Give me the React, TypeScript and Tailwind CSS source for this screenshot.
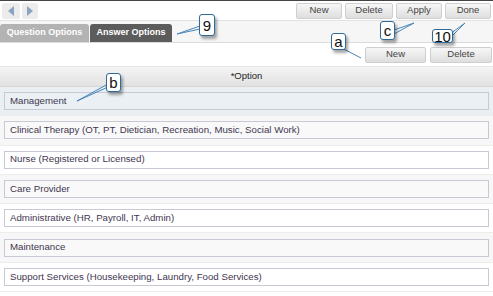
import React from 'react';

const options = [
  'Management',
  'Clinical Therapy (OT, PT, Dietician, Recreation, Music, Social Work)',
  'Nurse (Registered or Licensed)',
  'Care Provider',
  'Administrative (HR, Payroll, IT, Admin)',
  'Maintenance',
  'Support Services (Housekeeping, Laundry, Food Services)',
];

function ToolButton({ label, className = '' }: { label: string; className?: string }) {
  return (
    <div
      className={`h-[16px] flex items-center justify-center rounded-[2px] border border-[#cfcfcf] bg-gradient-to-b from-[#f7f7f7] to-[#dedede] text-[9.5px] text-[#444] ${className}`}
    >
      {label}
    </div>
  );
}

function Callout({ label, className }: { label: string; className: string }) {
  return (
    <div
      className={`absolute flex items-center justify-center rounded-[3px] border border-[#2f6b9a] bg-white text-[15px] leading-none text-[#111] shadow-[2px_3px_3px_rgba(0,0,0,0.35)] ${className}`}
    >
      {label}
    </div>
  );
}

export default function App() {
  return (
    <div className="relative w-[493px] h-[296px] overflow-hidden bg-white font-['Liberation_Sans',Arial,sans-serif]">
      {/* top toolbar */}
      <div className="h-[21px] border-t border-[#444] flex items-center justify-between px-[2px] border-b border-b-[#e2e2e2]">
        <div className="flex gap-[2px]">
          <div className="w-[18px] h-[16px] rounded-[2px] bg-[#ececec] flex items-center justify-center">
            <svg width="8" height="10" viewBox="0 0 8 10"><path d="M7 0 L1 5 L7 10 Z" fill="#8aa4c4" /></svg>
          </div>
          <div className="w-[16px] h-[16px] rounded-[2px] bg-[#ececec] flex items-center justify-center">
            <svg width="8" height="10" viewBox="0 0 8 10"><path d="M1 0 L7 5 L1 10 Z" fill="#8aa4c4" /></svg>
          </div>
        </div>
        <div className="flex gap-[3px]">
          <ToolButton label="New" className="w-[46px]" />
          <ToolButton label="Delete" className="w-[48px]" />
          <ToolButton label="Apply" className="w-[46px]" />
          <ToolButton label="Done" className="w-[46px]" />
        </div>
      </div>

      {/* tabs */}
      <div className="h-[22px] flex items-end bg-[#f6f6f6] border-b border-[#dcdcdc]">
        <div className="w-[89px] h-[18px] rounded-t-[3px] bg-[#b3b3b3] text-white font-bold text-[9px] flex items-center justify-center">
          Question Options
        </div>
        <div className="ml-[1px] w-[82px] h-[18px] rounded-t-[3px] bg-[#5c5c5c] text-white font-bold text-[9px] flex items-center justify-center">
          Answer Options
        </div>
      </div>

      {/* sub toolbar */}
      <div className="h-[24px] flex items-center justify-end gap-[4px] px-[1px] border-b border-[#e6e6e6]">
        <ToolButton label="New" className="w-[61px]" />
        <ToolButton label="Delete" className="w-[62px]" />
      </div>

      {/* header */}
      <div className="h-[20px] flex items-center justify-center bg-gradient-to-b from-[#f4f4f4] to-[#e2e2e2] border-b border-[#d6d6d6] text-[9.5px] text-[#222]">
        *Option
      </div>

      {/* rows */}
      <div className="flex flex-col">
        {options.map((opt, i) => {
          const selected = i === 0;
          const odd = i % 2 === 1;
          const rowBg = selected ? 'bg-[#e9eff3]' : odd ? 'bg-[#f7f7f7]' : 'bg-white';
          const inputBg = selected ? 'bg-[#eaf0f4]' : odd ? 'bg-[#f9f9f9]' : 'bg-white';
          return (
            <div key={opt} className={`h-[29.3px] flex items-center px-[4px] border-b border-[#ececec] ${rowBg}`}>
              <div
                className={`w-full h-[18px] flex items-center px-[5px] border border-[#c9c9d6] text-[9.7px] text-[#3f3650] ${inputBg}`}
              >
                {opt}
              </div>
            </div>
          );
        })}
      </div>

      {/* callout pointers */}
      <svg className="absolute inset-0 pointer-events-none" width="493" height="296">
        <g stroke="#4a86b8" strokeWidth="1" fill="none">
          <path d="M200 26 L177 34 L200 29" />
          <path d="M108 84 L77 101 L108 87" />
          <path d="M336 45 L361 58" />
          <path d="M394 30 L414 23 L394 34" />
          <path d="M450 34 L465 23 L452 36" />
        </g>
      </svg>

      <Callout label="9" className="left-[199px] top-[14px] w-[16px] h-[22px]" />
      <Callout label="c" className="left-[380px] top-[21px] w-[15px] h-[19px]" />
      <Callout label="10" className="left-[432px] top-[29px] w-[21px] h-[14px]" />
      <Callout label="a" className="left-[331px] top-[33px] w-[15px] h-[17px]" />
      <Callout label="b" className="left-[106px] top-[73px] w-[15px] h-[19px]" />
    </div>
  );
}
